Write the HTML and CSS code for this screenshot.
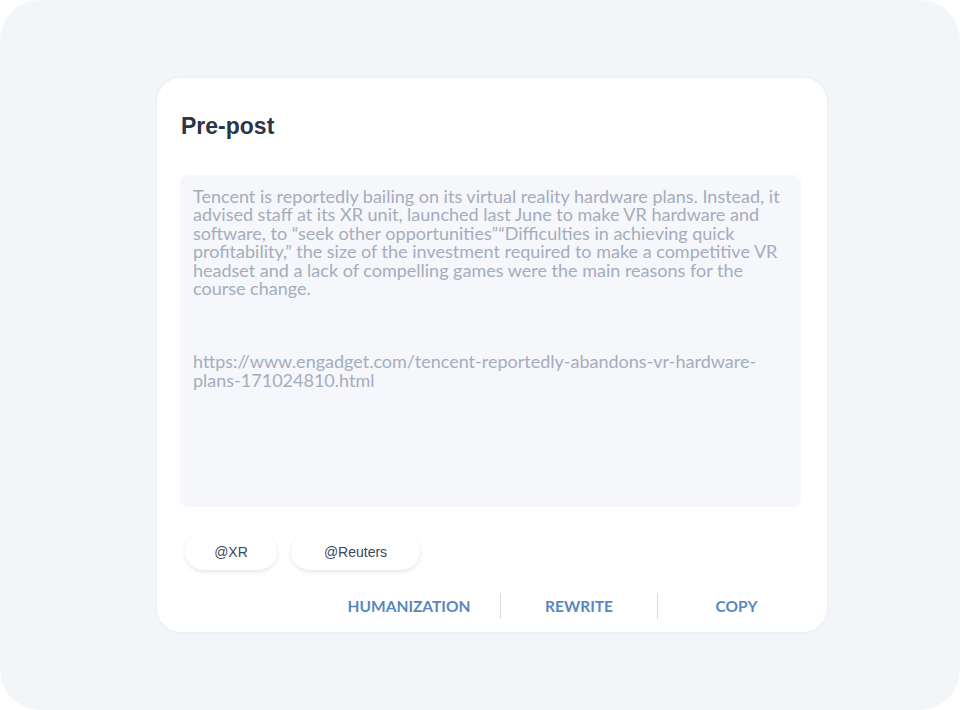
FILE: index.html
```html
<!DOCTYPE html>
<html>
<head>
<meta charset="utf-8">
<link rel="stylesheet" href="styles.css">
</head>
<body>
<div class="frame">
  <div class="card">
    <h1 class="title">Pre-post</h1>
    <div class="textbox">
      <p class="body">Tencent is reportedly bailing on its virtual reality hardware plans. Instead, it advised staff at its XR unit, launched last June to make VR hardware and software, to “seek other opportunities”“Difficulties in achieving quick profitability,” the size of the investment required to make a competitive VR headset and a lack of compelling games were the main reasons for the course change.</p>
      <p class="link">https://www.engadget.com/tencent-reportedly-abandons-vr-hardware-plans-171024810.html</p>
    </div>
    <div class="chips">
      <span class="chip chip-xr">@XR</span>
      <span class="chip chip-reuters">@Reuters</span>
    </div>
    <div class="actions">
      <span class="action action-human">HUMANIZATION</span>
      <span class="sep"></span>
      <span class="action action-rewrite">REWRITE</span>
      <span class="sep"></span>
      <span class="action action-copy">COPY</span>
    </div>
  </div>
</div>
</body>
</html>
```
FILE: styles.css
```css
html, body {
  margin: 0;
  padding: 0;
  background: #ffffff;
}
.frame {
  width: 960px;
  height: 710px;
  box-sizing: border-box;
  background: #f3f6f9;
  border-radius: 40px;
  padding: 78px 0 0 157px;
}
.card {
  width: 670px;
  height: 554px;
  box-sizing: border-box;
  background: #ffffff;
  border-radius: 24px;
  box-shadow: 0 0 4px rgba(40, 60, 90, 0.07);
  padding: 34px 26px 0 23px;
  display: flex;
  flex-direction: column;
}
.title {
  margin: 0 0 0 1px;
  font-family: "Liberation Sans", Arial, sans-serif;
  font-weight: 700;
  font-size: 23px;
  line-height: 28px;
  color: #2d3446;
}
.textbox {
  margin-top: 35px;
  height: 332px;
  box-sizing: border-box;
  background: #f5f7fa;
  border-radius: 8px;
  padding: 12px 14px 0 13px;
  font-family: Lato, "Liberation Sans", sans-serif;
  font-size: 18px;
  line-height: 18.4px;
  color: #a5adbd;
}
.textbox p {
  margin: 0;
}
.link {
  margin-top: 55px !important;
}
.chips {
  display: flex;
  gap: 14px;
  margin-top: 26px;
  padding-left: 5px;
}
.chip {
  height: 37px;
  border-radius: 19px;
  background: #ffffff;
  box-shadow: 0 2px 4px rgba(40, 60, 90, 0.12);
  display: flex;
  align-items: center;
  justify-content: center;
  font-family: "Liberation Sans", Arial, sans-serif;
  font-size: 14px;
  color: #3b4763;
}
.chip-xr { width: 92px; }
.chip-reuters { width: 129px; }
.actions {
  display: flex;
  justify-content: flex-end;
  align-items: center;
  margin-top: 23px;
  margin-right: -14px;
  height: 26px;
}
.action {
  font-family: Lato, "Liberation Sans", sans-serif;
  font-weight: 700;
  font-size: 15.5px;
  color: #5a87bd;
  text-align: center;
}
.action-human { width: 182px; }
.action-rewrite { width: 156px; }
.action-copy { width: 157px; }
.sep {
  width: 1px;
  height: 26px;
  background: #d8dde5;
}
```
